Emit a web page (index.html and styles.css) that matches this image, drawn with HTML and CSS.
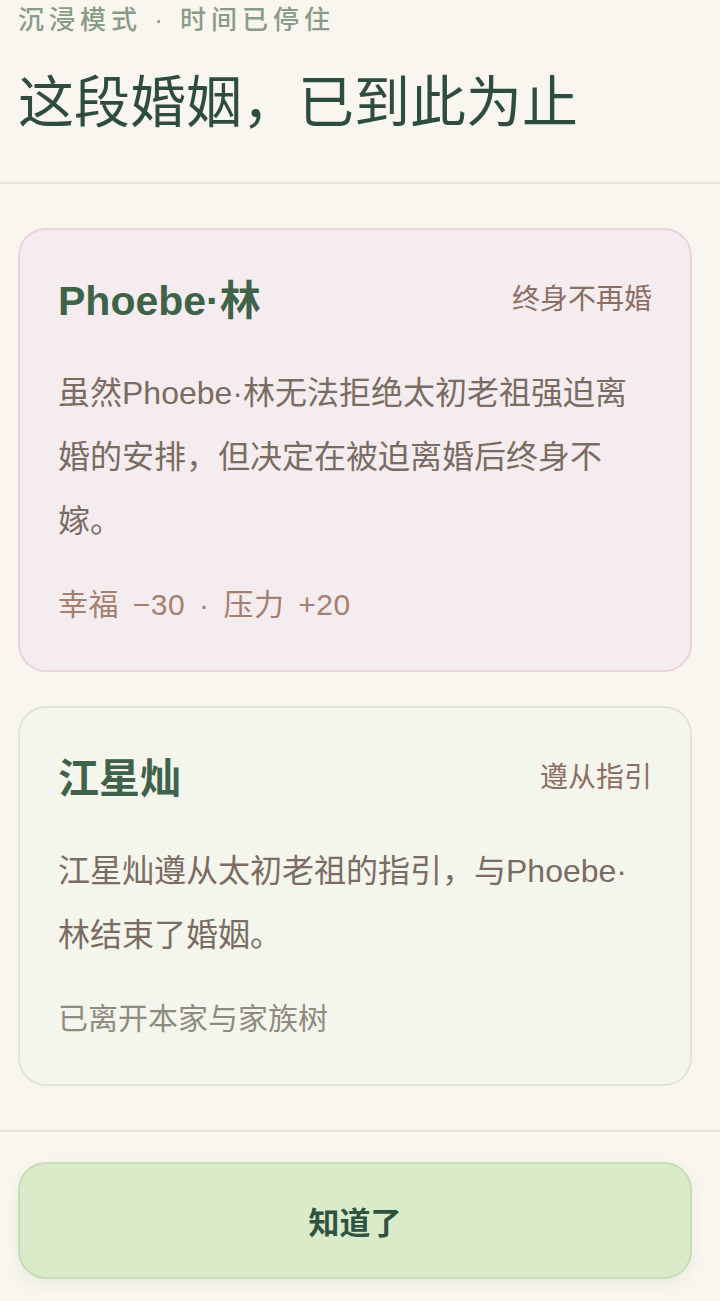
FILE: index.html
```html
<!DOCTYPE html>
<html lang="zh-CN">
<head>
    <meta charset="UTF-8">
    <meta name="viewport" content="width=device-width, initial-scale=1.0">
    <title>这段婚姻，已到此为止</title>
    <link rel="stylesheet" href="styles.css">
</head>
<body>
    <div class="sheet">
        <header class="sheet-header">
            <p class="eyebrow">沉浸模式 · 时间已停住</p>
            <h1>这段婚姻，已到此为止</h1>
        </header>

        <main class="sheet-body">
            <section class="person-card spouse">
                <div class="card-top">
                    <h2 class="person-name">Phoebe·林</h2>
                    <span class="person-tag">终身不再婚</span>
                </div>
                <p class="person-text">虽然Phoebe·林无法拒绝太初老祖强迫离婚的安排，但决定在被迫离婚后终身不嫁。</p>
                <p class="person-foot stats">幸福 −30 · 压力 +20</p>
            </section>

            <section class="person-card self">
                <div class="card-top">
                    <h2 class="person-name">江星灿</h2>
                    <span class="person-tag">遵从指引</span>
                </div>
                <p class="person-text">江星灿遵从太初老祖的指引，与Phoebe·林结束了婚姻。</p>
                <p class="person-foot note">已离开本家与家族树</p>
            </section>
        </main>

        <footer class="sheet-footer">
            <button class="confirm-btn">知道了</button>
        </footer>
    </div>
</body>
</html>
```

FILE: styles.css
```css
* {
    margin: 0;
    padding: 0;
    box-sizing: border-box;
    font-family: 'Liberation Sans', 'Noto Sans CJK SC', sans-serif;
}

body {
    background: #f8f6ef;
    min-height: 100vh;
}

.sheet {
    width: 720px;
    display: flex;
    flex-direction: column;
}

/* header */
.sheet-header {
    padding: 0 18px 40px;
    border-bottom: 2px solid #e4e1d8;
}

.eyebrow {
    font-size: 26px;
    line-height: 40px;
    letter-spacing: 5px;
    color: #8a9c87;
    font-weight: 500;
}

h1 {
    margin-top: 24px;
    font-size: 56px;
    line-height: 78px;
    font-weight: 400;
    color: #2f4d3e;
}

/* cards */
.sheet-body {
    padding: 44px 28px 44px 18px;
    display: flex;
    flex-direction: column;
    gap: 34px;
}

.person-card {
    border-radius: 28px;
    border: 2px solid;
    padding: 42px 38px 45px;
}

.spouse {
    background: #f5ecef;
    border-color: #ead3db;
}

.self {
    background: #f4f5ec;
    border-color: #e0e5d8;
}

.card-top {
    display: flex;
    justify-content: space-between;
    align-items: center;
    height: 49px;
}

.person-name {
    font-size: 41px;
    font-weight: 700;
    color: #3e6348;
}

.person-tag {
    font-size: 28px;
    color: #8c6e62;
}

.person-text {
    margin-top: 40px;
    font-size: 32px;
    line-height: 64px;
    color: #7a6c62;
}

.person-foot {
    margin-top: 32px;
    font-size: 30px;
    line-height: 40px;
}

.stats {
    color: #a3806f;
    word-spacing: 5px;
    letter-spacing: 0.5px;
}

.note {
    color: #8e8b80;
}

/* footer */
.sheet-footer {
    border-top: 2px solid #e4e1d8;
    padding: 30px 28px 21px 18px;
}

.confirm-btn {
    width: 100%;
    height: 117px;
    border-radius: 28px;
    border: 2px solid #c8dcb6;
    background: #daebc9;
    color: #2f5340;
    font-size: 31px;
    font-weight: 700;
    cursor: pointer;
    box-shadow: 0 6px 16px rgba(90, 110, 70, 0.08);
}
```
